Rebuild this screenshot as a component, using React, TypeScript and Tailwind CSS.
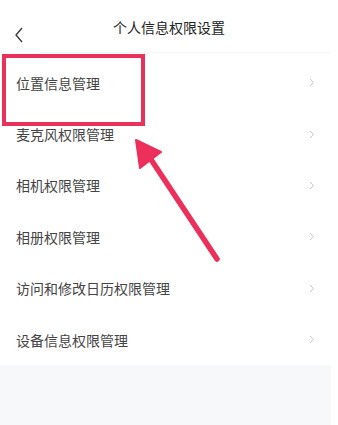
import React from 'react';

const items = [
  '位置信息管理',
  '麦克风权限管理',
  '相机权限管理',
  '相册权限管理',
  '访问和修改日历权限管理',
  '设备信息权限管理',
];

const Chevron: React.FC = () => (
  <svg width="6" height="9" viewBox="0 0 6 9" fill="none">
    <path d="M1 1l3.5 3.5L1 8" stroke="#cccccc" strokeWidth="1" />
  </svg>
);

export default function App() {
  return (
    <div
      className="relative w-[338px] h-[425px] bg-white overflow-hidden text-[#444]"
      style={{ fontFamily: '"Noto Sans CJK SC", "Noto Sans", sans-serif' }}
    >
      {/* Header */}
      <div className="relative h-[57px] flex justify-center">
        <button className="absolute left-[14px] top-[27px] p-0">
          <svg width="10" height="16" viewBox="0 0 10 16" fill="none">
            <path d="M8 1L2 8l6 7" stroke="#333" strokeWidth="1.3" />
          </svg>
        </button>
        <h1 className="pt-[17px] text-[14px] leading-[20px] text-[#222]">个人信息权限设置</h1>
        <div className="absolute left-[40px] right-[8px] bottom-[4px] h-px bg-[#f6f6f6]" />
      </div>

      {/* List */}
      <ul>
        {items.map((t) => (
          <li key={t} className="h-[51.4px] flex items-center justify-between pl-[16px] pr-[23px]">
            <span className="text-[14px] leading-[20px]">{t}</span>
            <Chevron />
          </li>
        ))}
      </ul>

      <div className="w-[331px] h-[60px] bg-[#f7f8fa]" />

      {/* Annotation overlay */}
      <svg className="absolute left-0 top-0 pointer-events-none" width="338" height="425" viewBox="0 0 338 425">
        <rect x="4" y="56" width="139" height="68" fill="none" stroke="#e8315b" strokeWidth="4" />
        <line x1="217" y1="259" x2="150" y2="158" stroke="#ec2f5b" strokeWidth="5.5" strokeLinecap="round" />
        <polygon points="136,140 140,168 161,152" fill="#ec2f5b" stroke="#ec2f5b" strokeWidth="2" strokeLinejoin="round" />
      </svg>
    </div>
  );
}
